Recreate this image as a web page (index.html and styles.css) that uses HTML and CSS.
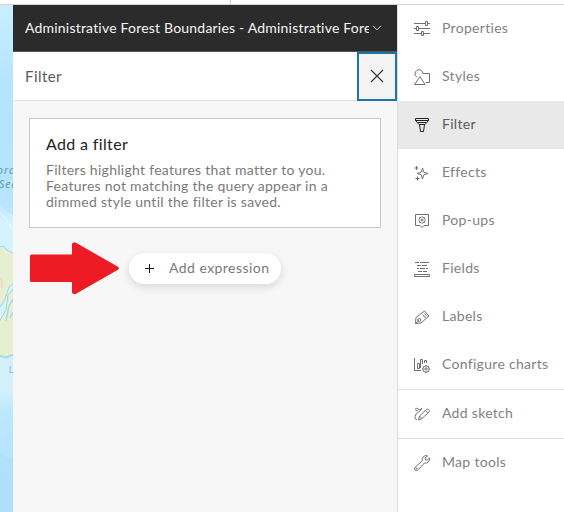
FILE: index.html
```html
<!DOCTYPE html>
<html lang="en">
<head>
<meta charset="utf-8">
<title>Map Viewer</title>
<link rel="stylesheet" href="styles.css">
</head>
<body>
<div class="topbar"></div>
<div class="workspace">
  <div class="map">
    <svg width="13" height="507" viewBox="0 5 13 507">
      <defs>
        <linearGradient id="sea" x1="0" y1="0" x2="0" y2="1">
          <stop offset="0" stop-color="#c8efff"/>
          <stop offset=".08" stop-color="#bdeaff"/>
          <stop offset=".16" stop-color="#b4e4fe"/>
          <stop offset=".38" stop-color="#b8e8ff"/>
          <stop offset=".43" stop-color="#d3f3ff"/>
          <stop offset=".76" stop-color="#d2f1fd"/>
          <stop offset=".8" stop-color="#bee8fe"/>
          <stop offset="1" stop-color="#aadffc"/>
        </linearGradient>
      </defs>
      <path fill="url(#sea)" d="M0 5h13v507H0z"/>
      <path fill="#b4e2fc" d="M0 104l4 3 3 8 6 4v96l-5-3-8-6z" opacity=".6"/>
      <path fill="none" stroke="#edfbff" d="M0 213l6 6 7 11"/>
      <path fill="#e6efd0" stroke="#a4d8e2" d="M-2 247l5-1 4 4 7 4v29l-5 4-4 12-5 8-3 2z"/>
      <path fill="#e6efd0" stroke="#a4d8e2" d="M14 288l-6 7-2 15-8 14v31l7 2 9-3z"/>
      <path fill="none" stroke="#a9dce6" stroke-width="1.500" d="M13 299l-4 7-3 15M10 318l3-6M0 356l6 2 7-3"/>
      <path fill="none" stroke="#e8c9c4" stroke-width=".7" d="M0 278l2 3v7"/>
      <path fill="#b0dffa" d="M0 453l5 4 8 1v54H0z" opacity=".8"/>
      <g class="map-label">
        <text x="-3" y="174">ora</text>
        <text x="-1" y="188">Sea</text>
      </g>
      <text class="map-place" x="9" y="373">L</text>
    </svg>
  </div>
  <main class="panel">
    <header class="layer">
      <span class="layer-name">Administrative Forest Boundaries - Administrative Forest</span>
      <svg width="10" height="8" viewBox="0 0 10 8"><path fill="none" stroke="#ddd" d="M1 1.800l4 4 4-4"/></svg>
    </header>
    <div class="heading">
      <h1>Filter</h1>
      <button class="close" aria-label="Close"><svg width="14" height="14" viewBox="0 0 14 14"><path fill="none" stroke="#333" stroke-width="1.100" d="M1 1l12 12M13 1L1 13"/></svg></button>
    </div>
    <section class="card">
      <h2>Add a filter</h2>
      <p>Filters highlight features that matter to you.<br>Features not matching the query appear in a<br>dimmed style until the filter is saved.</p>
    </section>
    <div class="action">
      <svg width="90" height="53" viewBox="0 0 90 53"><path fill="#ed1c24" d="M1.500 12.500H42V2.200Q42 .5 44 .5h1.500L87.500 24.500q3 2 0 3.500L45.500 52H44q-2 0-2-1.700V40H1.500Q0 40 0 38.500V14q0-1.500 1.500-1.500z"/></svg>
      <button class="add"><svg width="9" height="9" viewBox="0 0 9 9"><path stroke="#111" d="M4.500 0v9M0 4.500h9"/></svg><span>Add expression</span></button>
    </div>
  </main>
  <nav class="menu">
    <a><svg viewBox="0 0 16 16"><path d="M0 2.500h11M14 2.500h2M11.500.5h2v4h-2zM0 7.500h2M5 7.500h11M2.500 5.500h2v4h-2zM0 12.500h7M10 12.500h6M7.500 10.500h2v4h-2z"/></svg><span>Properties</span></a>
    <a><svg viewBox="0 0 16 16"><path d="M3 8.200A4 4 0 1 1 9 4.500M9 4.500h6.500v9H12M6 7.500l5 8H.5z"/></svg><span>Styles</span></a>
    <a class="selected"><svg viewBox="0 0 16 16"><path d="M1.500 1.500h13v2L11 7.500H5l-3.500-4zM1.500 3.500h13M4 5.500h8M5.500 7.500l1 7h3l1-7"/></svg><span>Filter</span></a>
    <a><svg viewBox="0 0 16 16"><path d="M8.500 3l1.300 4.200L14 8.500 9.800 9.800 8.500 14 7.200 9.800 3 8.500l4.200-1.300zM2.500 1v4M.5 3h4M3.500 11.500v4M1.500 13.500h4"/></svg><span>Effects</span></a>
    <a><svg viewBox="0 0 16 16"><path d="M1.500 1.500h13v11H10l-2 2-2-2H1.500z"/><path d="M8 3.500l1 1.100 1.500-.1-.1 1.500L11.500 7l-1.100 1 .1 1.500L9 9.400l-1 1.100-1-1.100-1.500.1.100-1.500-1.100-1 1.100-1-.1-1.500 1.500.1z"/><circle cx="8" cy="7" r="1"/></svg><span>Pop-ups</span></a>
    <a><svg viewBox="0 0 16 16"><path d="M1 1.500h4M6 1.500h9M3 4.500h4M8 4.500h5M3 7.500h2M6 7.500h5M12 7.500h2M4 10.500h4M9 10.500h4M.5 13.500h15v2H.5z"/></svg><span>Fields</span></a>
    <a><svg viewBox="0 0 16 16"><path d="M1.500 14.500l.5-6L10.500 2l4.500 5-8 7zM8.500 5.500l3 3.500M10.500 4.500l2.500 3M1.500 14.500L5 11.500"/><circle cx="5.300" cy="11" r="1.500"/></svg><span>Labels</span></a>
    <a><svg viewBox="0 0 16 16"><path d="M.5 1v12.500H7M3.500 11.500v-5h2v5zM6.500 11V2.500h2V7M10.500 6V3.500h2V6"/><circle cx="12" cy="12" r="3.200"/><circle cx="12" cy="12" r="1.200"/><path d="M12 8v1M12 15v1M8 12h1M15 12h1M9.300 9.300l.5.500M14.700 9.300l-.5.500M9.300 14.700l.5-.5M14.700 14.700l-.5-.5"/></svg><span>Configure charts</span></a>
    <a class="divided"><svg viewBox="0 0 16 16"><path d="M4.500 14l1-4 7-6.500q1-1 2.200 0t.4 2.300L8 12.500zM5.500 10l2.400 2.500M11.500 4.500l2.300 2M1 3q2-1.500 3 0t4-.5M7.500 2.500Q7.500 4.500 4.500 6T1 10.500t2 3.500M1.500 4.500h2"/></svg><span>Add sketch</span></a>
    <a class="divided"><svg viewBox="0 0 16 16"><path d="M.9 12.400l7.400-6.600Q7.600 3 9.500 1.500T13.500.8L11 3l.4 1.800 1.800.3L15.500 3q.5 2.500-1.200 4T10.500 8l-6.800 7.100q-1.400 1-2.600 0t-.2-2.700z"/><circle cx="2.600" cy="13.600" r=".5"/></svg><span>Map tools</span></a>
  </nav>
</div>
</body>
</html>
```
FILE: styles.css
```css
* { box-sizing: border-box; }
body { margin: 0; width: 564px; height: 512px; overflow: hidden; background: #fff; font-family: Lato, "Open Sans", sans-serif; }
svg { display: block; flex: none; }
h1, h2, p { margin: 0; font-weight: 400; }
button { border: 0; padding: 0; font: inherit; }
.topbar { height: 5px; width: 231px; border-right: 1px solid #ccc; }
.workspace { display: flex; height: 507px; box-shadow: 0 -1px #d4d4d4; }
.map { width: 13px; overflow: hidden; }
.map-label { font: italic 10.5px "Noto Sans", sans-serif; letter-spacing: 1px; fill: #6699ab; }
.map-place { font: 8px "Noto Sans", sans-serif; fill: #8eb4c3; }
.panel { width: 384px; background: #f7f7f7; }
.layer { display: flex; align-items: center; gap: 3px; height: 47px; padding: 0 0 1px 12px; background: #2b2b2b; border-bottom: 1px solid #555; color: #f5f5f5; font-size: 14px; }
.layer-name { width: 344px; overflow: hidden; white-space: nowrap; letter-spacing: .2px; font-variant-ligatures: none; }
.heading { display: flex; justify-content: space-between; align-items: center; height: 49px; padding-left: 12px; background: #fff; border-bottom: 1px solid #dfdfdf; }
h1 { color: #5a5a5a; font-size: 15px; letter-spacing: .45px; padding-bottom: 1px; }
.close { display: grid; place-items: center; width: 40px; height: 49px; background: #f3f3f3; border: 2px solid #1b75a8; }
.card { width: 352px; height: 110px; margin: 17px 16px 0; padding: 15px 16px; border: 1px solid #cacaca; background: #fff; }
h2 { color: #222; font-size: 16px; line-height: 20px; letter-spacing: .35px; margin-bottom: 8px; }
p { color: #7a7a7a; font-size: 14px; line-height: 16px; letter-spacing: .28px; white-space: nowrap; }
.action { display: flex; align-items: center; gap: 9px; padding: 14px 0 0 17px; }
.add { display: flex; align-items: center; gap: 15px; width: 152px; height: 31px; margin-bottom: 1px; padding-left: 16px; border-radius: 16px; background: #fff; box-shadow: 0 3px 8px rgba(0,0,0,.13); color: #7a7a7a; font-size: 14px; letter-spacing: .45px; }
.add span { padding-bottom: 2px; }
.menu { width: 167px; border-left: 1px solid #dcdcdc; background: #fff; }
.menu a { display: flex; align-items: center; gap: 12px; height: 48px; padding-left: 16px; color: #828282; font-size: 14px; letter-spacing: .3px; white-space: nowrap; }
.menu span { padding-bottom: 3px; }
.menu svg { width: 16px; height: 16px; fill: none; stroke: #707070; stroke-width: 1; }
.menu .selected { background: #e9e9e9; color: #5a5a5a; }
.menu .selected svg { stroke: #222; }
.menu .divided { height: 49px; border-top: 1px solid #ddd; }
```
